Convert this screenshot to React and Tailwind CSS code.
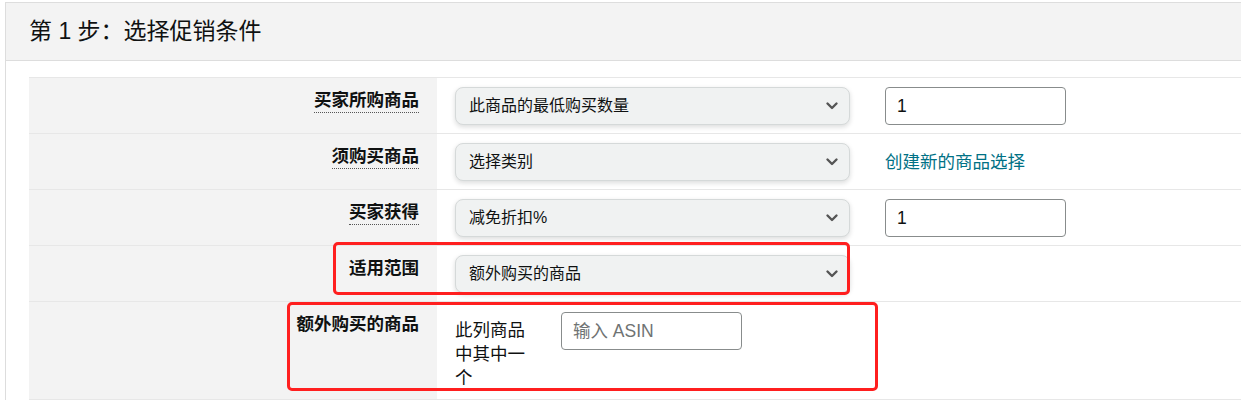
import React from "react";

const font = { fontFamily: '"Liberation Sans", "Noto Sans CJK SC", sans-serif' };

function Chevron() {
  return (
    <svg width="14" height="10" viewBox="0 0 14 10" className="shrink-0">
      <path d="M2.5 2.5 L7 7 L11.5 2.5" fill="none" stroke="#555" strokeWidth="2.4" strokeLinecap="round" strokeLinejoin="round" />
    </svg>
  );
}

function Select({ text }) {
  return (
    <div className="flex h-[38px] w-[395px] items-center justify-between rounded-[8px] border border-[#d5d9d9] bg-[#f0f2f2] pl-[13px] pr-[10px] text-[16px] text-[#0f1111] shadow-[0_2px_5px_rgba(15,17,17,0.15)]">
      <span>{text}</span>
      <Chevron />
    </div>
  );
}

function Input({ value, placeholder }) {
  return (
    <div className="flex h-[38px] w-[181px] items-center rounded-[4px] border border-[#888c8c] bg-white pl-[11px] text-[17.5px]">
      {value ? <span className="text-[#0f1111]">{value}</span> : <span className="text-[#6f7373]">{placeholder}</span>}
    </div>
  );
}

function Label({ text, dotted }) {
  return (
    <div className="w-[408px] shrink-0 bg-[#f3f3f3] pr-[18px] pt-[10px] text-right">
      <span className={"inline-block text-[17.5px] font-bold leading-[24px] text-[#0f1111] " + (dotted ? "border-b border-dotted border-[#555]" : "")}>
        {text}
      </span>
    </div>
  );
}

export default function App() {
  return (
    <div className="relative h-[401px] w-full overflow-hidden bg-white" style={font}>
      <div className="ml-[5px] mt-[2px] w-[1300px] border-l border-t border-[#dddddd]">
        <div className="flex h-[58px] items-center border-b border-[#dddddd] bg-[#f3f3f3] pl-[23px] text-[23px] text-[#0f1111]">
          第 1 步：选择促销条件
        </div>
        <div className="pl-[23px] pt-[16px]">
          <div className="border-b border-[#e7e7e7]">
            <div className="flex h-[56px] border-t border-[#e7e7e7]">
              <Label text="买家所购商品" dotted />
              <div className="flex items-start gap-[35px] pl-[18px] pt-[9px]">
                <Select text="此商品的最低购买数量" />
                <Input value="1" />
              </div>
            </div>
            <div className="flex h-[56px] border-t border-[#e7e7e7]">
              <Label text="须购买商品" dotted />
              <div className="flex items-start gap-[35px] pl-[18px] pt-[9px]">
                <Select text="选择类别" />
                <div className="flex h-[38px] items-center text-[17.5px] text-[#007185]">创建新的商品选择</div>
              </div>
            </div>
            <div className="flex h-[56px] border-t border-[#e7e7e7]">
              <Label text="买家获得" dotted />
              <div className="flex items-start gap-[35px] pl-[18px] pt-[9px]">
                <Select text="减免折扣%" />
                <Input value="1" />
              </div>
            </div>
            <div className="flex h-[56px] border-t border-[#e7e7e7]">
              <Label text="适用范围" />
              <div className="flex items-start gap-[35px] pl-[18px] pt-[9px]">
                <Select text="额外购买的商品" />
              </div>
            </div>
            <div className="flex h-[98px] border-t border-[#e7e7e7]">
              <Label text="额外购买的商品" />
              <div className="flex items-start pl-[18px] pt-[10px]">
                <div className="w-[72px] pt-[6px] text-[17.5px] leading-[24px] text-[#0f1111]">此列商品中其中一个</div>
                <div className="ml-[34px]">
                  <Input placeholder="输入 ASIN" />
                </div>
              </div>
            </div>
          </div>
        </div>
      </div>
      <div className="absolute left-[333px] top-[242px] h-[53px] w-[517px] rounded-[5px] border-[3px] border-[#ff1f1f]" />
      <div className="absolute left-[287px] top-[302px] h-[89px] w-[591px] rounded-[5px] border-[3px] border-[#ff1f1f]" />
    </div>
  );
}
